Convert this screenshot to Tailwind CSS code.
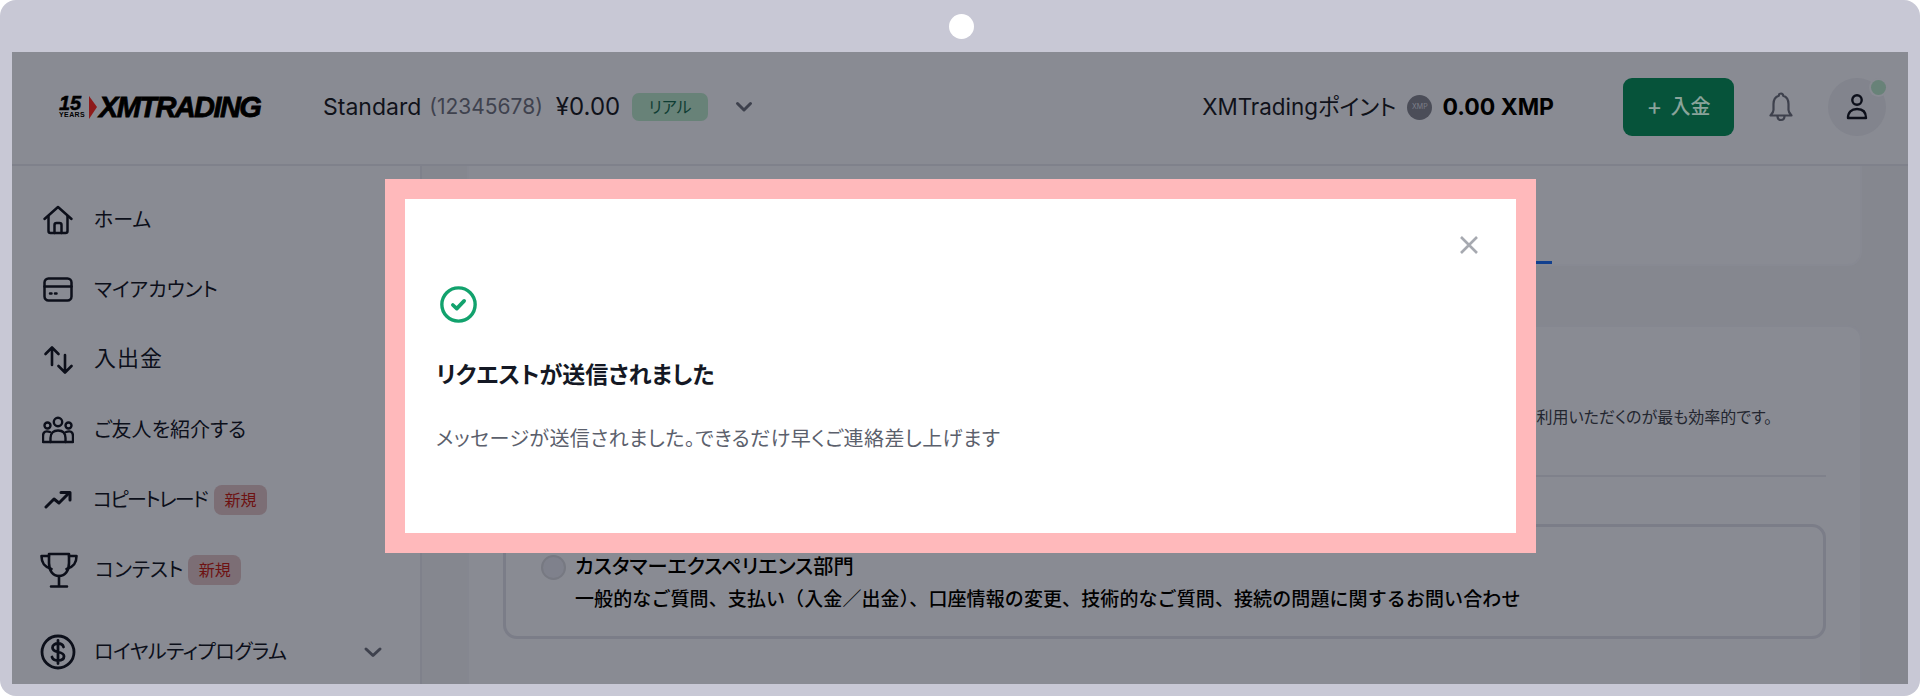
<!DOCTYPE html>
<html lang="ja">
<head>
    <meta charset="UTF-8">
    <meta name="viewport" content="width=device-width, initial-scale=1.0">
    <title>XMTrading</title>
    <script src="https://cdn.jsdelivr.net/npm/@tailwindcss/browser@4"></script>
</head>
<body class="bg-white">
    <div class="relative w-[1920px] h-[696px] overflow-hidden rounded-[16px] bg-[#c8c8d5] px-[12px] pb-[12px] flex flex-col font-['Inter','Noto_Sans_CJK_JP',sans-serif] [font-feature-settings:'palt'] text-[#0c0f1a]">

        <!-- browser bar -->
        <div class="h-[52px] flex items-center justify-center shrink-0">
            <div class="ml-[2px] w-[25px] h-[25px] rounded-full bg-white"></div>
        </div>

        <div class="flex-1 min-h-0 flex flex-col bg-[#898b93]">
            <!-- top header -->
            <header class="h-[114px] shrink-0 border-b-2 border-[#7f818b] flex items-center pl-[47px] pr-[22px] pb-[2px]">
                <div class="w-[203px] h-[24px] flex items-center shrink-0 text-black italic font-['Liberation_Sans',sans-serif] font-bold">
                    <div class="w-[29px] flex flex-col items-start">
                        <span class="text-[20px] leading-[16px] [-webkit-text-stroke:0.5px_#000]">15</span>
                        <span class="text-[7px] leading-[8px] tracking-[0.4px] not-italic">YEARS</span>
                    </div>
                    <svg class="w-[10px] h-[24px] shrink-0" viewBox="0 0 10 24"><path d="M1 1 L9 12 L1 24 Z" fill="#8e1a1a"/></svg>
                    <span class="text-[29px] leading-none tracking-[-1.6px] [-webkit-text-stroke:0.8px_#000] ml-[1px]">XMTRADING</span>
                </div>

                <div class="ml-[61px] flex items-center whitespace-nowrap">
                    <span class="text-[23px] text-[#10121a]">Standard</span>
                    <span class="ml-[8px] text-[21px] text-[#3f424e]">(12345678)</span>
                    <span class="ml-[13px] text-[24px] text-[#10121a]">¥0.00</span>
                    <span class="ml-[12px] w-[76px] h-[28px] rounded-[7px] bg-[#688278] text-[#0f3d33] text-[16px] flex items-center justify-center">リアル</span>
                    <svg class="ml-[26px] w-[20px] h-[20px]" viewBox="0 0 20 20" fill="none" stroke="#3e414d" stroke-width="3" stroke-linecap="round" stroke-linejoin="round"><path d="M3.500 6.500L10 13l6.500-6.500"/></svg>
                </div>

                <div class="ml-auto flex items-center whitespace-nowrap">
                    <span class="text-[22.400px] text-[#10121a]">XMTradingポイント</span>
                    <div class="ml-[11px] w-[25px] h-[25px] rounded-full bg-[#4b4d58] text-[#7d7f89] text-[7px] flex items-center justify-center">XMP</div>
                    <span class="ml-[10px] text-[23px] font-bold text-black">0.00 XMP</span>
                    <button class="ml-[69px] w-[111px] h-[58px] rounded-[9px] bg-[#06533a] text-[#8aa39a] text-[20px] font-medium flex items-center justify-center gap-[8px]">
                        <span class="text-[24px] leading-none font-normal">+</span><span>入金</span>
                    </button>
                    <svg class="ml-[32px] w-[30px] h-[32px]" viewBox="0 0 30 32" fill="none" stroke="#3e414d" stroke-width="2.2" stroke-linecap="round" stroke-linejoin="round"><path d="M15 2.500c-1.400 0-2.200 1-2.200 2.300C9.300 6 7.500 9 7.500 13v6c0 2-1.200 3.300-3 5.500h21c-1.800-2.200-3-3.500-3-5.500v-6c0-4-1.800-7-5.300-8.200 0-1.300-.8-2.300-2.200-2.300z"/><path d="M11.500 25c0 2.500 1.500 4 3.500 4s3.500-1.500 3.500-4"/></svg>
                    <div class="relative ml-[32px] w-[58px] h-[58px] rounded-full bg-[#82848d] flex items-center justify-center">
                        <svg class="w-[24px] h-[28px]" viewBox="0 0 24 28" fill="none" stroke="#0c0f1a" stroke-width="2.4" stroke-linecap="round" stroke-linejoin="round"><circle cx="12" cy="7" r="4.700"/><path d="M3 25c0-6 3.500-9 9-9s9 3 9 9z"/></svg>
                        <span class="absolute right-[0px] top-[2px] w-[15px] h-[15px] rounded-full bg-[#688278] ring-2 ring-[#898b93]"></span>
                    </div>
                </div>
            </header>

            <div class="flex-1 min-h-0 flex">
                <!-- sidebar -->
                <aside class="w-[410px] shrink-0 h-full border-r-2 border-[#7f818b] pl-[29px] pr-[38px] text-[20px] text-[#0c0f1a] relative">
                    <div class="flex items-center h-[70px] mt-[19px]">
                        <svg class="w-[32px] h-[32px] ml-[1px] shrink-0" viewBox="0 0 32 32" fill="none" stroke="#0c0f1a" stroke-width="2.500" stroke-linecap="round" stroke-linejoin="round"><path d="M2.500 15L16 3l13.500 12"/><path d="M6.500 12v15a2 2 0 0 0 2 2h15a2 2 0 0 0 2-2V12"/><path d="M12.500 29v-8a2 2 0 0 1 2-2h3a2 2 0 0 1 2 2v8"/></svg>
                        <span class="ml-[20px]">ホーム</span>
                    </div>
                    <div class="flex items-center h-[70px]">
                        <svg class="w-[30px] h-[26px] ml-[2px] shrink-0" viewBox="0 0 30 26" fill="none" stroke="#0c0f1a" stroke-width="2.500" stroke-linecap="round" stroke-linejoin="round"><rect x="1.500" y="1.500" width="27" height="22" rx="4"/><path d="M1.500 9.500h27"/><path d="M7 16.500h1.500M12 16.500h1.500"/></svg>
                        <span class="ml-[21px]">マイアカウント</span>
                    </div>
                    <div class="flex items-center h-[70px]">
                        <svg class="w-[30px] h-[30px] ml-[2px] shrink-0" viewBox="0 0 30 30" fill="none" stroke="#0c0f1a" stroke-width="2.600" stroke-linecap="round" stroke-linejoin="round"><path d="M9 20V3M2.500 9L9 2.500 15.500 9"/><path d="M22 10v17M15.500 21L22 27.500 28.500 21"/></svg>
                        <span class="ml-[21px] mb-[4px] text-[22px] tracking-[1px]">入出金</span>
                    </div>
                    <div class="flex items-center h-[70px]">
                        <svg class="w-[32px] h-[28px] ml-[1px] shrink-0" viewBox="0 0 32 28" fill="none" stroke="#0c0f1a" stroke-width="2.400" stroke-linecap="round" stroke-linejoin="round"><circle cx="16" cy="6" r="4.200"/><circle cx="5.500" cy="9.500" r="3"/><circle cx="26.500" cy="9.500" r="3"/><path d="M8.500 26v-4c0-5 3-7.500 7.500-7.500s7.500 2.500 7.500 7.500v4z"/><path d="M8 16c-4-1.500-7-.5-7 4v6h7.500M24 16c4-1.500 7-.5 7 4v6h-7.500"/></svg>
                        <span class="ml-[20px]">ご友人を紹介する</span>
                    </div>
                    <div class="flex items-center h-[70px]">
                        <svg class="w-[28px] h-[20px] ml-[3px] shrink-0" viewBox="0 0 28 20" fill="none" stroke="#0c0f1a" stroke-width="3" stroke-linecap="round" stroke-linejoin="round"><path d="M2 17l8-8 5 4 10-10"/><path d="M17 2.500h9V10"/></svg>
                        <span class="ml-[21px] tracking-[-1.7px]">コピートレード</span>
                        <span class="ml-[7px] w-[53px] h-[30px] rounded-[8px] bg-[#7c6e75] text-[#6e1212] text-[16px] flex items-center justify-center">新規</span>
                    </div>
                    <div class="flex items-center h-[70px]">
                        <svg class="w-[38px] h-[36px] -ml-[1px] shrink-0" viewBox="0 0 38 36" fill="none" stroke="#0c0f1a" stroke-width="2.600" stroke-linecap="round" stroke-linejoin="round"><path d="M9 2h20v9c0 8-4 13-10 13S9 19 9 11z"/><path d="M9 4H1.500c0 7 2.500 11 10 13M29 4h7.500c0 7-2.500 11-10 13"/><path d="M19 24v10M11 34.500h16"/></svg>
                        <span class="ml-[17px]">コンテスト</span>
                        <span class="ml-[5px] w-[53px] h-[30px] rounded-[8px] bg-[#7c6e75] text-[#6e1212] text-[16px] flex items-center justify-center">新規</span>
                    </div>
                    <div class="flex items-center h-[70px] mt-[12px]">
                        <svg class="w-[36px] h-[36px] -ml-[1px] shrink-0" viewBox="0 0 36 36" fill="none" stroke="#0c0f1a" stroke-width="2.800" stroke-linecap="round" stroke-linejoin="round"><circle cx="18" cy="18" r="16"/><path d="M23.500 13c-.5-2-2.500-3.500-5.500-3.500s-5.500 1.500-5.500 4.200c0 5.800 11.500 2.800 11.500 8.600 0 2.700-2.500 4.200-6 4.200s-5.500-1.500-6-3.500M18 6.500v23"/></svg>
                        <span class="ml-[18px] tracking-[-0.5px]">ロイヤルティプログラム</span>
                        <svg class="ml-auto mr-[-1px] w-[20px] h-[20px]" viewBox="0 0 20 20" fill="none" stroke="#3e414d" stroke-width="3" stroke-linecap="round" stroke-linejoin="round"><path d="M3 7l7 6.500L17 7"/></svg>
                    </div>
                </aside>

                <!-- main content behind the dialog -->
                <main class="flex-1 min-w-0 h-full bg-[#85878f] pl-[45px] pr-[46px] overflow-hidden">
                    <div class="h-[100px] rounded-b-[14px] bg-[#898b93] border-x-2 border-b-2 border-[#878992] relative">
                        <div class="absolute left-0 w-[1083px] bottom-[0px] h-[3px] bg-[#12408f]"></div>
                    </div>
                    <div class="mt-[59px] h-[400px] rounded-t-[14px] bg-[#898b93] border-2 border-[#858790] px-[34px]">
                        <div class="h-[150px] border-b-2 border-[#7f818b] flex items-end justify-end pb-[46px] pr-[54px]">
                            <p class="text-[16px] leading-[24px] text-[#23262f] whitespace-nowrap">利用いただくのが最も効率的です。</p>
                        </div>
                        <div class="mt-[47px] h-[115px] rounded-[14px] border-[3px] border-[#7b7d88] pl-[35px] pt-[26px]">
                            <div class="flex items-center font-medium text-black">
                                <span class="w-[25px] h-[25px] rounded-full bg-[#7f818c] border-2 border-[#777982] shrink-0"></span>
                                <span class="ml-[9px] text-[20.200px] leading-[28px]">カスタマーエクスペリエンス部門</span>
                            </div>
                            <p class="ml-[34px] mt-[6px] text-[19px] font-medium leading-[26px] tracking-[0.1px] text-black whitespace-nowrap [font-feature-settings:normal]">一般的なご質問、支払い（入金／出金）、口座情報の変更、技術的なご質問、接続の問題に関するお問い合わせ</p>
                        </div>
                    </div>
                </main>
            </div>
        </div>

        <!-- success dialog -->
        <div class="absolute left-[385px] top-[179px] w-[1151px] h-[374px] border-[20px] border-[#ffb9bb] bg-white pl-[31px] pt-[87px]">
            <svg class="absolute right-[36px] top-[35px] w-[22px] h-[22px]" viewBox="0 0 22 22" fill="none" stroke="#a6a9b0" stroke-width="2.600"><path d="M3 3l16 16M19 3L3 19"/></svg>
            <svg class="ml-[4px] w-[37px] h-[37px]" viewBox="0 0 36 36" fill="none" stroke="#12a26d" stroke-width="3.300" stroke-linecap="round" stroke-linejoin="round"><circle cx="18" cy="18" r="16.200"/><path d="M12.500 18.500l3.800 3.500 7.200-7.500" stroke-width="3.600"/></svg>
            <h2 class="mt-[37px] text-[23px] leading-[30px] font-semibold text-[#141824]">リクエストが送信されました</h2>
            <p class="mt-[35px] text-[20px] leading-[28px] tracking-[0.45px] text-[#5b606c]">メッセージが送信されました。できるだけ早くご連絡差し上げます</p>
        </div>
    </div>
</body>
</html>
